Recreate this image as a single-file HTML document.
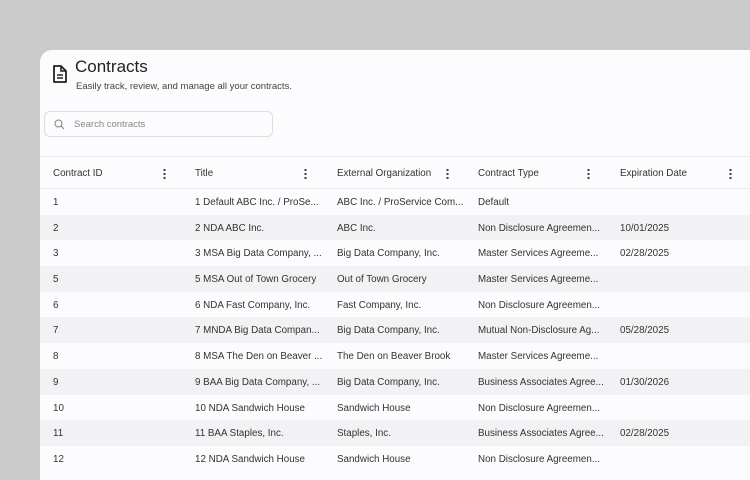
<!DOCTYPE html>
<html><head><style>
*{margin:0;padding:0;box-sizing:border-box}
body{width:750px;height:474px;background:#cbcbcb;overflow:hidden;font-family:"Liberation Sans",sans-serif;position:relative}
.panel{position:absolute;left:40px;top:50px;width:720px;height:430px;background:#fcfbfd;border-radius:12px 12px 0 0;overflow:hidden}
h1{position:absolute;left:35px;top:7px;font-size:17px;font-weight:normal;color:#222}
.sub{position:absolute;left:36px;top:31px;font-size:9.5px;color:#444}
.search{position:absolute;left:4px;top:61px;width:229px;height:26px;border:1px solid #ddd;border-radius:6px;background:#fcfbfd}
.search span{position:absolute;left:29px;top:7px;font-size:9.5px;color:#888}
.tbl{position:absolute;left:0;top:106px;width:720px}
.row{position:relative;height:25.7px;font-size:9.8px;color:#333}
.row div{position:absolute;top:8px;white-space:nowrap}
.hdr{height:33px;border-top:1px solid #eee;border-bottom:1px solid #eee}
.hdr div{top:11px}
.alt{background:#f2f1f3}
.k{width:3px;height:11px;top:11px!important;background:radial-gradient(circle,#444 1.1px,transparent 1.3px) 0 0/3px 4px repeat-y}
</style></head><body>
<div class="panel">
<svg style="position:absolute;left:12px;top:14px" width="16" height="20" viewBox="0 0 16 20"><path d="M2 2h7l5 5v11H2z" fill="none" stroke="#222" stroke-width="1.8" stroke-linejoin="round"/><path d="M9 2v5h5M5 11h6M5 14h6" fill="none" stroke="#222" stroke-width="1.6"/></svg>
<h1>Contracts</h1>
<div class="sub">Easily track, review, and manage all your contracts.</div>
<div class="search"><svg style="position:absolute;left:9px;top:7px" width="11" height="11" viewBox="0 0 11 11"><circle cx="4.5" cy="4.5" r="3.5" fill="none" stroke="#888" stroke-width="1.1"/><path d="M7 7l3 3" stroke="#888" stroke-width="1.1"/></svg><span>Search contracts</span></div>
<div class="tbl">
<div class="row hdr"><div style="left:13px">Contract ID</div><div class="k" style="left:123px"></div><div style="left:155px">Title</div><div class="k" style="left:264px"></div><div style="left:297px">External Organization</div><div class="k" style="left:406px"></div><div style="left:438px">Contract Type</div><div class="k" style="left:547px"></div><div style="left:580px">Expiration Date</div><div class="k" style="left:689px"></div></div>
<div class="row"><div style="left:13px">1</div><div style="left:155px">1 Default ABC Inc. / ProSe...</div><div style="left:297px">ABC Inc. / ProService Com...</div><div style="left:438px">Default</div></div>
<div class="row alt"><div style="left:13px">2</div><div style="left:155px">2 NDA ABC Inc.</div><div style="left:297px">ABC Inc.</div><div style="left:438px">Non Disclosure Agreemen...</div><div style="left:580px">10/01/2025</div></div>
<div class="row"><div style="left:13px">3</div><div style="left:155px">3 MSA Big Data Company, ...</div><div style="left:297px">Big Data Company, Inc.</div><div style="left:438px">Master Services Agreeme...</div><div style="left:580px">02/28/2025</div></div>
<div class="row alt"><div style="left:13px">5</div><div style="left:155px">5 MSA Out of Town Grocery</div><div style="left:297px">Out of Town Grocery</div><div style="left:438px">Master Services Agreeme...</div></div>
<div class="row"><div style="left:13px">6</div><div style="left:155px">6 NDA Fast Company, Inc.</div><div style="left:297px">Fast Company, Inc.</div><div style="left:438px">Non Disclosure Agreemen...</div></div>
<div class="row alt"><div style="left:13px">7</div><div style="left:155px">7 MNDA Big Data Compan...</div><div style="left:297px">Big Data Company, Inc.</div><div style="left:438px">Mutual Non-Disclosure Ag...</div><div style="left:580px">05/28/2025</div></div>
<div class="row"><div style="left:13px">8</div><div style="left:155px">8 MSA The Den on Beaver ...</div><div style="left:297px">The Den on Beaver Brook</div><div style="left:438px">Master Services Agreeme...</div></div>
<div class="row alt"><div style="left:13px">9</div><div style="left:155px">9 BAA Big Data Company, ...</div><div style="left:297px">Big Data Company, Inc.</div><div style="left:438px">Business Associates Agree...</div><div style="left:580px">01/30/2026</div></div>
<div class="row"><div style="left:13px">10</div><div style="left:155px">10 NDA Sandwich House</div><div style="left:297px">Sandwich House</div><div style="left:438px">Non Disclosure Agreemen...</div></div>
<div class="row alt"><div style="left:13px">11</div><div style="left:155px">11 BAA Staples, Inc.</div><div style="left:297px">Staples, Inc.</div><div style="left:438px">Business Associates Agree...</div><div style="left:580px">02/28/2025</div></div>
<div class="row"><div style="left:13px">12</div><div style="left:155px">12 NDA Sandwich House</div><div style="left:297px">Sandwich House</div><div style="left:438px">Non Disclosure Agreemen...</div></div>
</div>
</div>
</body></html>
